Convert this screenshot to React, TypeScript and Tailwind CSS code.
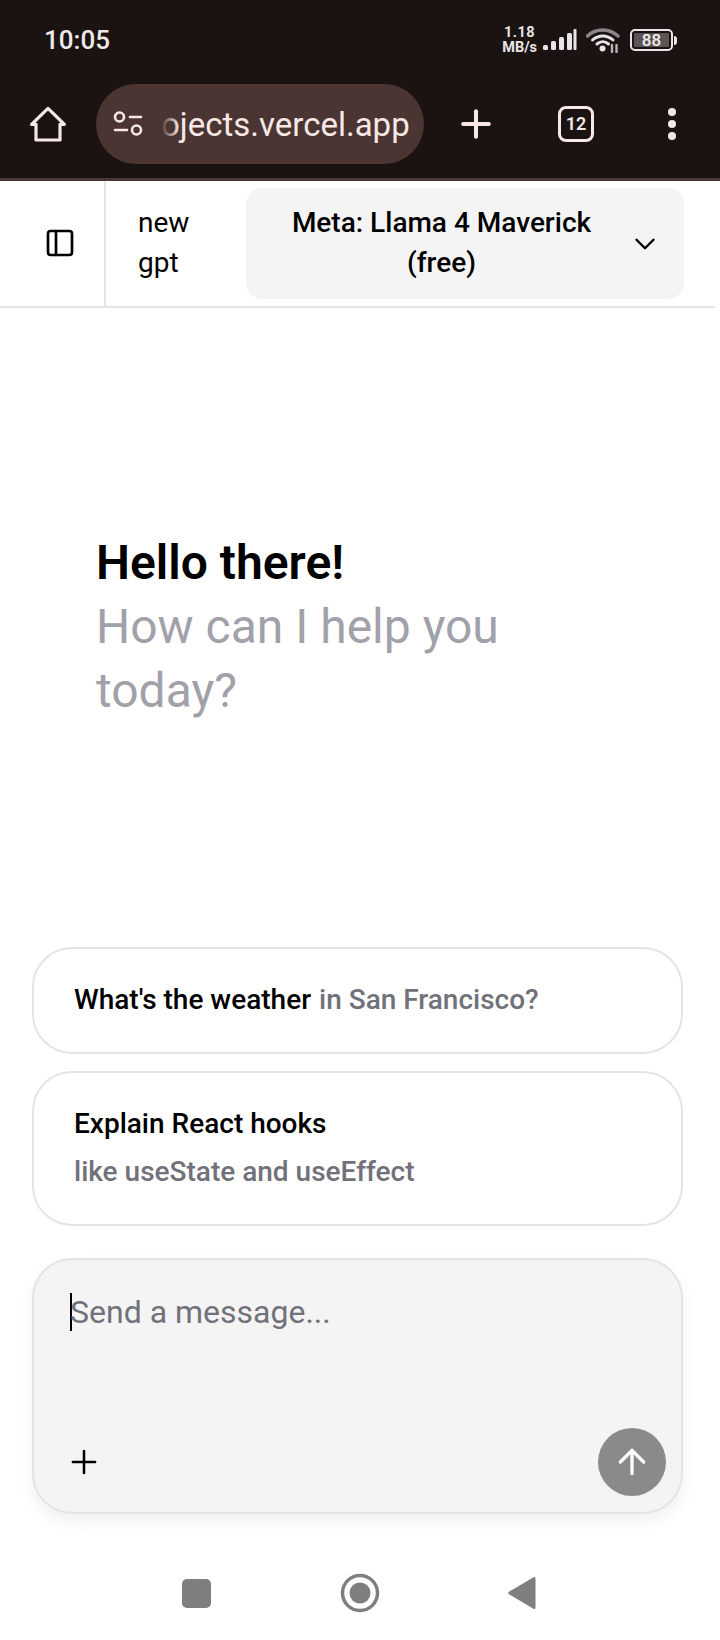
import { ArrowUp, ChevronDown, PanelLeft, Plus } from "lucide-react";

const SUGGESTIONS = [
  { title: "What's the weather", hint: "in San Francisco?", inline: true },
  { title: "Explain React hooks", hint: "like useState and useEffect", inline: false },
];

function StatusIcons() {
  return (
    <div className="flex items-center">
      <div className="mr-[5px] flex flex-col items-center text-[14.5px] leading-[15px] font-bold text-[#e9e5e4]">
        <span className="tracking-[0.5px]">1.18</span>
        <span>MB/s</span>
      </div>
      <svg width="36" height="24" viewBox="0 0 36 24" fill="#e9e5e4">
        <rect x="1" y="17" width="5" height="5" rx="1.5" />
        <rect x="9" y="13" width="5" height="9" rx="1.5" />
        <rect x="17" y="9" width="5" height="13" rx="1.5" />
        <rect x="25" y="5" width="5" height="17" rx="1.5" />
        <rect x="31.5" y="1" width="3" height="21" rx="1" />
      </svg>
      <svg className="ml-[8px]" width="34" height="26" viewBox="0 0 34 26" fill="none" strokeLinecap="round">
        <path d="M1.5 9C10 1 23 1 32 9" stroke="#8b8685" strokeWidth="3.4" />
        <path d="M6.5 13C12.5 7.5 21 7.5 27 13" stroke="#e9e5e4" strokeWidth="3" />
        <path d="M11 17C14.5 14 19 14 22.5 17" stroke="#e9e5e4" strokeWidth="3" />
        <circle cx="16.5" cy="21.5" r="3" fill="#e9e5e4" />
        <path d="M26 18v7M30.5 18v7" stroke="#b8b3b2" strokeWidth="2.4" />
      </svg>
      <div className="ml-[10px] flex items-center">
        <div className="flex h-[22px] w-[43px] items-center justify-center rounded-[5px] border-2 border-[#e9e5e4] p-[2px]">
          <span className="flex h-[14px] w-full items-center justify-center rounded-[1px] bg-[#5a5554] text-[17px] leading-none font-medium text-[#f2efee]">
            88
          </span>
        </div>
        <div className="ml-[1px] h-[9px] w-[3px] rounded-r-full bg-[#e9e5e4]" />
      </div>
    </div>
  );
}

function BrowserChrome() {
  return (
    <div className="h-[181px] shrink-0 border-b-[3px] border-[#4a3633] bg-[#1b1212] font-['Roboto',sans-serif]">
      <div className="flex h-[78px] items-center justify-between pt-[2px] pr-[43px] pl-[44px]">
        <span className="text-[26px] leading-none font-medium text-[#ece9e8]">10:05</span>
        <StatusIcons />
      </div>
      <div className="mt-[6px] flex h-[80px] items-center text-[#f7e8e6]">
        <svg className="ml-[30px]" width="36" height="36" viewBox="0 0 36 36" fill="none" stroke="currentColor" strokeWidth="3.2" strokeLinecap="round" strokeLinejoin="round">
          <path d="M1.6 18.4 18 2.4l16.4 16H30V34H6V18.4Z" />
        </svg>
        <div className="relative ml-[30px] flex h-[80px] w-[328px] items-center rounded-full bg-[#4a3533]">
          <svg className="ml-[17px]" width="30" height="26" viewBox="0 0 30 26" fill="none" stroke="currentColor" strokeWidth="2.6" strokeLinecap="round">
            <circle cx="6.5" cy="6" r="4.5" />
            <path d="M17 6h11M2 19h12" />
            <circle cx="23.5" cy="19" r="4.5" />
          </svg>
          <div className="relative ml-[18px] flex items-center">
            <span className="text-[33px] leading-none whitespace-nowrap">ojects.vercel.app</span>
            <div className="absolute top-0 bottom-0 left-0 w-[18px] bg-gradient-to-r from-[#4a3533] to-transparent" />
          </div>
        </div>
        <Plus className="ml-[30px]" size={44} strokeWidth={2.2} />
        <div className="ml-[60px] flex h-[36px] w-[36px] items-center justify-center rounded-[8px] border-[3.5px] border-current text-[18px] leading-none font-semibold">
          12
        </div>
        <div className="ml-[74px] flex flex-col gap-[4px]">
          <span className="h-[8px] w-[8px] rounded-full bg-current" />
          <span className="h-[8px] w-[8px] rounded-full bg-current" />
          <span className="h-[8px] w-[8px] rounded-full bg-current" />
        </div>
      </div>
    </div>
  );
}

export default function App() {
  return (
    <div className="flex h-[1640px] w-[720px] flex-col overflow-hidden bg-white font-['Roboto',sans-serif] text-black">
      <BrowserChrome />

      {/* Chat header */}
      <header className="flex h-[127px] w-[715px] shrink-0 border-b-2 border-[#e4e4e7]">
        <div className="flex w-[106px] shrink-0 items-center justify-center border-r-2 border-[#e4e4e7]">
          <PanelLeft size={32} strokeWidth={2} className="mb-[2px] ml-[16px]" />
        </div>
        <div className="flex w-[140px] shrink-0 items-center pb-[2px] pl-[32px] text-[28px] leading-[40px]">
          <span className="w-[76px]">new gpt</span>
        </div>
        <div className="mt-[7px] flex h-[111px] w-[438px] items-center rounded-[16px] bg-[#f4f4f5] pr-[22px]">
          <div className="flex-1 pb-[2px] pl-[17px] text-center text-[28px] leading-[40px] font-medium">Meta: Llama 4 Maverick (free)</div>
          <ChevronDown size={34} strokeWidth={1.7} className="ml-[8px]" />
        </div>
      </header>

      {/* Greeting */}
      <main className="flex-1 pt-[223px] pl-[96px]">
        <h1 className="text-[48px] leading-[64px] font-semibold">Hello there!</h1>
        <p className="w-[460px] text-[48px] leading-[64px] text-[#a1a1aa]">How can I help you today?</p>
      </main>

      {/* Suggestions and composer */}
      <div className="flex flex-col pr-[37px] pl-[32px]">
        <div className="flex flex-col gap-[17px]">
          {SUGGESTIONS.map((s) => (
            <div
              key={s.title}
              className={`rounded-[40px] border-2 border-[#e4e4e7] bg-white px-[40px] pb-[2px] text-[28px] font-medium ${
                s.inline ? "flex h-[107px] items-center gap-[8px]" : "flex h-[155px] flex-col justify-center gap-[10px] leading-[38px]"
              }`}
            >
              <span>{s.title}</span>
              <span className="text-[#71717a]">{s.hint}</span>
            </div>
          ))}
        </div>
        <div className="mt-[32px] flex h-[256px] flex-col justify-between rounded-[40px] border-2 border-[#e4e4e7] bg-[#f4f4f5] pt-[33px] pr-[15px] pb-[16px] pl-[36px] shadow-[0_8px_16px_rgba(0,0,0,0.06)]">
          <div className="flex items-center">
            <span className="h-[38px] w-[2px] bg-black" />
            <span className="ml-[-2px] text-[32px] leading-[38px] text-[#71717a]">Send a message...</span>
          </div>
          <div className="flex items-center justify-between">
            <Plus size={38} strokeWidth={1.6} className="ml-[-5px]" />
            <div className="flex h-[68px] w-[68px] items-center justify-center rounded-full bg-[#8a8a8a] text-white">
              <ArrowUp size={40} strokeWidth={2} />
            </div>
          </div>
        </div>
      </div>

      {/* Android nav bar */}
      <nav className="flex h-[126px] shrink-0 items-center pt-[32px] pl-[182px] text-[#7f7f7f]">
        <span className="h-[29px] w-[29px] rounded-[5px] bg-current" />
        <svg className="ml-[129px]" width="40" height="40" viewBox="0 0 40 40">
          <circle cx="20" cy="20" r="17.5" fill="none" stroke="currentColor" strokeWidth="3.5" />
          <circle cx="20" cy="20" r="10.5" fill="currentColor" />
        </svg>
        <svg className="ml-[128px]" width="28" height="34" viewBox="0 0 28 34" fill="currentColor">
          <path d="M27.5 2.5v29c0 1.5-1 2-2 1.3L1 18.2c-1-.7-1-1.7 0-2.4L25.5 1.2c1-.7 2-.2 2 1.3Z" />
        </svg>
      </nav>
    </div>
  );
}
